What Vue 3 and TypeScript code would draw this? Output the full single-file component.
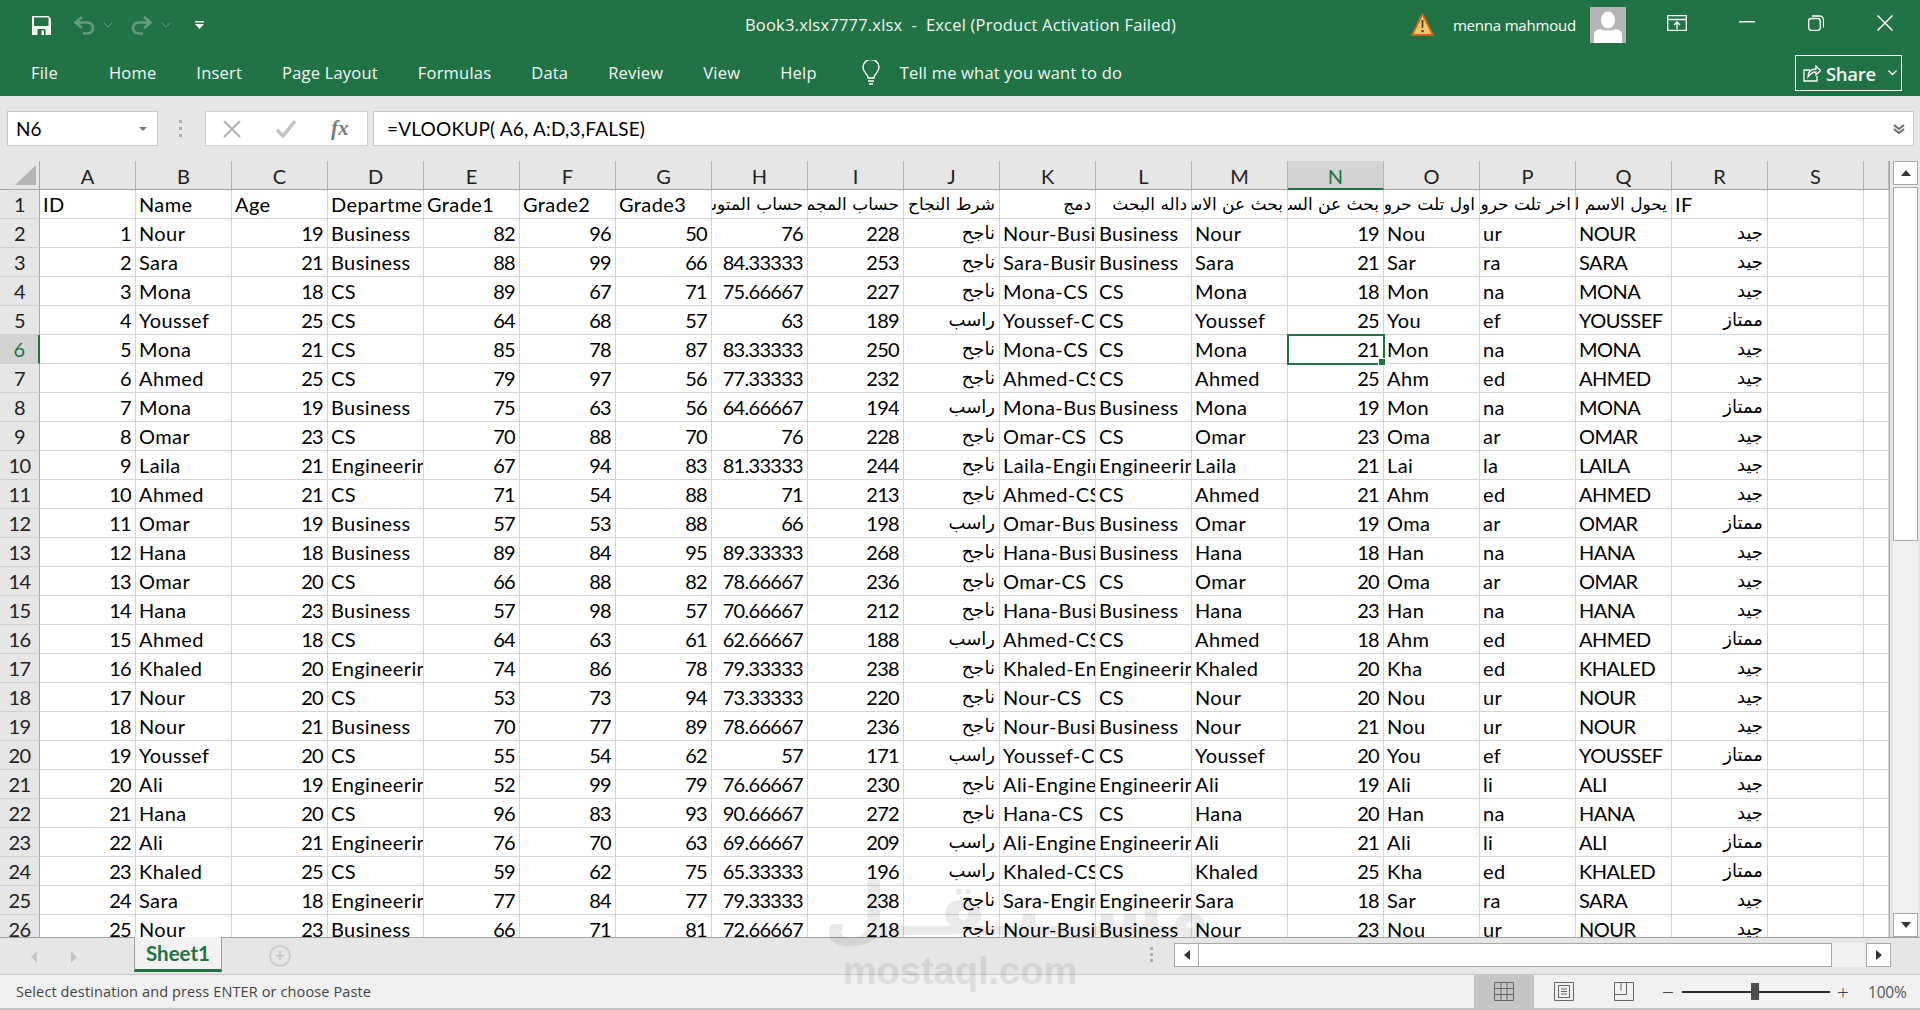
<template>
  <div class="app">
    <header class="titlebar">
      <div class="qat">
        <svg class="save" width="19" height="19" viewBox="0 0 19 19">
          <path d="M0 0h16.500L19 2.500V19H0z" fill="#f4f4f4" />
          <path d="M2 1.500h14.500v8.500H2z" fill="#217346" />
          <path d="M5.500 13h8v6h-8z" fill="#217346" />
          <path d="M9.500 14.500h2.500V19H9.500z" fill="#fff" />
        </svg>
        <svg class="dim" width="22" height="19" viewBox="0 0 22 19" fill="none" stroke="#fff" stroke-width="2.600">
          <path d="M9 1 2.500 6.500 9 12" />
          <path d="M3 6.500h11c8 0 8 11 0 11h-4" />
        </svg>
        <svg class="dim chev" width="8" height="5" viewBox="0 0 8 5" fill="none" stroke="#fff"><path d="m0 0 4 4 4-4" /></svg>
        <svg class="dim redo" width="22" height="19" viewBox="0 0 22 19" fill="none" stroke="#fff" stroke-width="2.600">
          <path d="m13 1 6.500 5.500L13 12" />
          <path d="M19 6.500H8c-8 0-8 11 0 11h4" />
        </svg>
        <svg class="dim chev" width="8" height="5" viewBox="0 0 8 5" fill="none" stroke="#fff"><path d="m0 0 4 4 4-4" /></svg>
        <svg class="custom" width="9" height="8" viewBox="0 0 9 8" fill="#fff"><path d="M0 0h9v1.500H0zM0 3h9L4.500 8z" /></svg>
      </div>
      <div class="doc-title">Book3.xlsx7777.xlsx&nbsp; - &nbsp;Excel (Product Activation Failed)</div>
      <div class="window-side">
        <svg class="warn" width="23" height="23" viewBox="0 0 23 23">
          <path d="M11.500 1 22 22H1z" fill="#f5c56b" stroke="#c9661f" stroke-width="1.800" stroke-linejoin="round" />
          <path d="M10.500 7h2l-.3 8h-1.400zM10.400 17h2.200v2.200h-2.200z" fill="#4a3a20" />
        </svg>
        <span class="user">menna mahmoud</span>
        <div class="avatar">
          <svg width="36" height="36" viewBox="0 0 36 36" fill="#fff">
            <ellipse cx="18" cy="13" rx="7" ry="8.500" />
            <path d="M4 36v-8c0-4 2-5 6-6 3 2 13 2 16 0 4 1 6 2 6 6v8z" />
          </svg>
        </div>
        <svg class="ribbon-opt" width="20" height="16" viewBox="0 0 20 16" fill="none" stroke="#fff" stroke-width="1.300">
          <path d="M.7.700h18.600v14.600H.7zM.7 4.500h18.600M10 14V7M7 10l3-3 3 3" />
        </svg>
        <svg class="win-min" width="16" height="2" viewBox="0 0 16 2"><path d="M0 0h16v1.500H0z" fill="#fff" /></svg>
        <svg class="win-restore" width="16" height="16" viewBox="0 0 16 16" fill="none" stroke="#fff" stroke-width="1.300">
          <rect x=".7" y="3.500" width="11.500" height="11.800" rx="2.500" />
          <path d="M4 1h7.500a4 4 0 0 1 4 4v7.500" />
        </svg>
        <svg class="win-close" width="16" height="16" viewBox="0 0 16 16" stroke="#fff" stroke-width="1.500"><path d="m.5.500 15 15M15.500.500l-15 15" /></svg>
      </div>
    </header>

    <nav class="ribbon">
      <span v-for="tab in tabs" :key="tab" class="tab">{{ tab }}</span>
      <svg class="bulb" width="18" height="26" viewBox="0 0 18 26" fill="none" stroke="#fff" stroke-width="1.400">
        <path d="M6 18c0-4-5-6-5-10.500a8 8 0 0 1 16 0C17 12 12 14 12 18z" />
        <path d="M6 21h6M7 24h4" />
      </svg>
      <span class="tell">Tell me what you want to do</span>
      <div class="share">
        <svg width="18" height="18" viewBox="0 0 18 18" fill="none" stroke="#fff" stroke-width="1.300">
          <path d="M7 6H1v11h13v-5" />
          <path d="M5 13c0-5 3-8 8-8V2l4.500 4.500L13 11V8c-4 0-6 2-8 5z" />
        </svg>
        <b>Share</b>
        <svg width="9" height="6" viewBox="0 0 9 6" fill="none" stroke="#fff" stroke-width="1.400"><path d="m.5.500 4 4 4-4" /></svg>
      </div>
    </nav>

    <section class="formula-row">
      <div class="name-box">
        <span>N6</span>
        <i class="caret"></i>
      </div>
      <div class="grip"><i></i><i></i><i></i></div>
      <div class="fx-box">
        <svg width="18" height="18" viewBox="0 0 18 18" stroke="#b3b3b3" stroke-width="2"><path d="m1 1 16 16M17 1 1 17" /></svg>
        <svg width="20" height="18" viewBox="0 0 20 18" fill="none" stroke="#c4c4c4" stroke-width="3.500"><path d="m1 10 6 6L19 1" /></svg>
        <span class="fx">fx</span>
      </div>
      <div class="formula-input">
        <span>=VLOOKUP( A6, A:D,3,FALSE)</span>
        <svg width="12" height="10" viewBox="0 0 12 10" fill="none" stroke="#6a6a6a" stroke-width="2"><path d="m1 1 5 4 5-4M1 5l5 4 5-4" /></svg>
      </div>
    </section>

    <section class="sheet-area">
      <div class="grid-wrap">
        <div class="grid">
          <div class="corner"><i></i></div>
          <div v-for="col in columns" :key="col" class="col-head" :class="{ picked: col === 'N' }">{{ col }}</div>
          <div class="col-head"></div>

          <template v-for="(row, r) in rows" :key="r">
            <div class="row-head" :class="{ picked: r === 5 }">{{ r + 1 }}</div>
            <div
              v-for="(cell, c) in row"
              :key="c"
              class="cell"
              :class="[cell.kind, { active: r === 5 && c === 13, top: r === 0 }]"
              :dir="cell.kind === 'ar' ? 'rtl' : undefined"
            >{{ cell.text }}</div>
          </template>
        </div>
      </div>
      <div class="vscroll">
        <div class="sb-btn"><i class="arrow up"></i></div>
        <div class="vthumb"></div>
        <div class="sb-btn"><i class="arrow down"></i></div>
      </div>
    </section>

    <section class="tabstrip">
      <i class="tri left"></i>
      <i class="tri right"></i>
      <div class="sheet-tab">Sheet1</div>
      <div class="add-sheet">+</div>
      <div class="grip strip-grip"><i></i><i></i><i></i></div>
      <div class="hscroll">
        <div class="sb-btn"><i class="arrow back"></i></div>
        <div class="hthumb"></div>
        <div class="sb-btn fwd"><i class="arrow next"></i></div>
      </div>
    </section>

    <footer class="statusbar">
      <span class="status-text">Select destination and press ENTER or choose Paste</span>
      <div class="views">
        <div class="view on">
          <svg width="20" height="19" viewBox="0 0 20 19" fill="none" stroke="#666"><path d="M.5.500h19v18H.5zM.5 6.500h19M.5 12.500h19M7 .5v18M13 .5v18" /></svg>
        </div>
        <div class="view">
          <svg width="20" height="19" viewBox="0 0 20 19" fill="none" stroke="#666"><path d="M.5.500h19v18H.5zM4.500 3.500h11v12h-11zM7 7h6M7 9.500h6M7 12h6" /></svg>
        </div>
        <div class="view">
          <svg width="20" height="19" viewBox="0 0 20 19" fill="none" stroke="#666"><path d="M.5.500h19v18H.5zM.5 12.500h12V.5M7 .5v8" /></svg>
        </div>
      </div>
      <span class="zoom-sign minus">−</span>
      <div class="slider"><i></i></div>
      <span class="zoom-sign plus">+</span>
      <span class="zoom-val">100%</span>
    </footer>

    <div class="watermark">
      <div class="wm-ar">مســتـقــل</div>
      <div class="wm-en">mostaql.com</div>
    </div>
  </div>
</template>

<script setup lang="ts">
interface Student {
  name: string
  age: number
  dept: string
  g1: number
  g2: number
  g3: number
}

interface Cell {
  text: string
  kind: string
}

const tabs = ['File', 'Home', 'Insert', 'Page Layout', 'Formulas', 'Data', 'Review', 'View', 'Help']
const columns = 'ABCDEFGHIJKLMNOPQRS'.split('')

const raw: [string, number, string, number, number, number][] = [
  ['Nour', 19, 'Business', 82, 96, 50],
  ['Sara', 21, 'Business', 88, 99, 66],
  ['Mona', 18, 'CS', 89, 67, 71],
  ['Youssef', 25, 'CS', 64, 68, 57],
  ['Mona', 21, 'CS', 85, 78, 87],
  ['Ahmed', 25, 'CS', 79, 97, 56],
  ['Mona', 19, 'Business', 75, 63, 56],
  ['Omar', 23, 'CS', 70, 88, 70],
  ['Laila', 21, 'Engineering', 67, 94, 83],
  ['Ahmed', 21, 'CS', 71, 54, 88],
  ['Omar', 19, 'Business', 57, 53, 88],
  ['Hana', 18, 'Business', 89, 84, 95],
  ['Omar', 20, 'CS', 66, 88, 82],
  ['Hana', 23, 'Business', 57, 98, 57],
  ['Ahmed', 18, 'CS', 64, 63, 61],
  ['Khaled', 20, 'Engineering', 74, 86, 78],
  ['Nour', 20, 'CS', 53, 73, 94],
  ['Nour', 21, 'Business', 70, 77, 89],
  ['Youssef', 20, 'CS', 55, 54, 62],
  ['Ali', 19, 'Engineering', 52, 99, 79],
  ['Hana', 20, 'CS', 96, 83, 93],
  ['Ali', 21, 'Engineering', 76, 70, 63],
  ['Khaled', 25, 'CS', 59, 62, 75],
  ['Sara', 18, 'Engineering', 77, 84, 77],
  ['Nour', 23, 'Business', 66, 71, 81],
]

const students: Student[] = raw.map(([name, age, dept, g1, g2, g3]) => ({ name, age, dept, g1, g2, g3 }))

const txt = (text: string): Cell => ({ text, kind: 'txt' })
const caps = (text: string): Cell => ({ text, kind: 'txt caps' })
const num = (text: string | number): Cell => ({ text: String(text), kind: 'num' })
const ar = (text: string): Cell => ({ text, kind: 'ar' })

const headerRow: Cell[] = [
  txt('ID'), txt('Name'), txt('Age'), txt('Department'), txt('Grade1'), txt('Grade2'), txt('Grade3'),
  ar('حساب المتوسط'), ar('حساب المجموع'), ar('شرط النجاح'), ar('دمج'), ar('داله البحث'),
  ar('بحث عن الاسم'), ar('بحث عن السن'), ar('اول تلت حروف'), ar('اخر تلت حروف'), ar('يحول الاسم لكبتل'),
  txt('IF'), txt(''), txt(''),
]

// الصفوف محسوبة من البيانات زي ما هي في الشيت
const rows: Cell[][] = [
  headerRow,
  ...students.map((s, i) => {
    const sum = s.g1 + s.g2 + s.g3
    const avg = sum / 3
    const pass = avg >= 70
    return [
      num(i + 1), txt(s.name), num(s.age), txt(s.dept), num(s.g1), num(s.g2), num(s.g3),
      num(parseFloat(avg.toFixed(5))), num(sum), ar(pass ? 'ناجح' : 'راسب'),
      txt(`${s.name}-${s.dept}`), txt(s.dept), txt(s.name), num(s.age),
      txt(s.name.slice(0, 3)), txt(s.name.slice(-2)), caps(s.name.toUpperCase()),
      ar(pass ? 'جيد' : 'ممتاز'), txt(''), txt(''),
    ]
  }),
]
</script>

<style>
html,
body {
  margin: 0;
  height: 100%;
  overflow: hidden;
  background: #e6e6e6;
}
</style>

<style scoped>
.app {
  position: relative;
  display: flex;
  flex-direction: column;
  width: 1920px;
  height: 1010px;
  overflow: hidden;
  font-family: "Open Sans", "Noto Sans", sans-serif;
  background: #e6e6e6;
}

.titlebar {
  position: relative;
  display: flex;
  justify-content: space-between;
  height: 50px;
  background: #217346;
  color: #fff;
}

.qat {
  display: flex;
  align-items: center;
  padding-left: 32px;
}

.save {
  margin-right: 22px;
}

.dim {
  opacity: 0.3;
}

.chev {
  margin-left: 9px;
}

.redo {
  margin-left: 19px;
}

.custom {
  margin-left: 25px;
}

.doc-title {
  position: absolute;
  left: 745px;
  top: 13px;
  font-size: 16.500px;
  line-height: 24px;
  letter-spacing: 0.2px;
  white-space: nowrap;
  color: #f2f6f3;
}

.window-side {
  display: flex;
  align-items: flex-start;
  padding-right: 27px;
}

.warn {
  margin-top: 13px;
}

.user {
  margin: 14px 14px 0 19px;
  font-size: 15px;
  line-height: 22px;
  letter-spacing: -0.2px;
  white-space: nowrap;
}

.avatar {
  width: 36px;
  height: 36px;
  margin-top: 7px;
  background: #b5b5b5;
}

.avatar svg {
  display: block;
}

.ribbon-opt {
  margin: 15px 0 0 41px;
}

.win-min {
  margin: 21px 0 0 52px;
}

.win-restore {
  margin: 15px 0 0 53px;
}

.win-close {
  margin: 15px 0 0 53px;
}

.ribbon {
  display: flex;
  align-items: center;
  gap: 40px;
  height: 46px;
  padding-left: 31px;
  background: #217346;
  color: #f4f7f5;
  font-size: 16.500px;
  letter-spacing: 0.2px;
}

.tab {
  white-space: nowrap;
  margin-top: -1px;
}

.tab:first-child {
  margin-right: 11px;
}

.bulb {
  margin-left: 5px;
}

.tell {
  margin-top: -1px;
  margin-left: -20px;
  white-space: nowrap;
}

.share {
  display: flex;
  align-items: center;
  box-sizing: border-box;
  width: 107px;
  height: 36px;
  margin: 0 18px 0 auto;
  padding: 0 0 0 7px;
  border: 1px solid #fff;
  font-size: 18.500px;
  letter-spacing: -0.3px;
}

.share b {
  margin: 0 12px 0 5px;
  font-weight: 600;
}

.formula-row {
  display: flex;
  height: 35px;
  margin-top: 15px;
  padding-left: 7px;
}

.name-box {
  display: flex;
  align-items: center;
  justify-content: space-between;
  box-sizing: border-box;
  width: 151px;
  padding: 0 10px 0 8px;
  background: #fff;
  border: 1px solid #c6c6c6;
  font-family: Lato, sans-serif;
  font-size: 19px;
}

.caret {
  border: 4px solid transparent;
  border-top: 4px solid #777;
  border-bottom: 0;
}

.grip {
  display: flex;
  flex-direction: column;
  justify-content: center;
  gap: 4px;
  width: 3px;
  margin: 0 23px 0 21px;
}

.grip i {
  display: block;
  width: 3px;
  height: 3px;
  background: #adadad;
}

.fx-box {
  display: flex;
  align-items: center;
  box-sizing: border-box;
  width: 163px;
  padding-left: 17px;
  gap: 35px;
  background: #fff;
  border: 1px solid #d2d2d2;
}

.fx {
  font-family: "Liberation Serif", serif;
  font-size: 21px;
  font-style: italic;
  font-weight: 700;
  color: #7a7a7a;
}

.formula-input {
  display: flex;
  align-items: center;
  justify-content: space-between;
  box-sizing: border-box;
  width: 1541px;
  margin-left: 5px;
  padding: 0 8px 0 13px;
  background: #fff;
  border: 1px solid #c6c6c6;
  font-family: Lato, sans-serif;
  font-size: 19px;
  letter-spacing: 0.2px;
}

.sheet-area {
  display: flex;
  height: 776px;
  margin-top: 15px;
}

.grid-wrap {
  width: 1889px;
  height: 776px;
  overflow: hidden;
  border-right: 1px solid #ababab;
  border-bottom: 1px solid #9f9f9f;
  margin-bottom: -1px;
  background: #fff;
}

.grid {
  display: grid;
  grid-template-columns: 40px repeat(19, 96px) 25px;
  grid-auto-rows: 29px;
  font-family: Lato, sans-serif;
  font-size: 20px;
  line-height: 28px;
  color: #000;
}

.corner,
.col-head,
.row-head {
  box-sizing: border-box;
  background: #e6e6e6;
  color: #222;
  text-align: center;
}

.corner {
  position: relative;
  border-right: 1px solid #a9a9a9;
  border-bottom: 1px solid #a9a9a9;
}

.corner i {
  position: absolute;
  right: 3px;
  bottom: 4px;
  border-left: 21px solid transparent;
  border-bottom: 20px solid #b4b4b4;
}

.col-head {
  border-right: 1px solid #b5b5b5;
  border-bottom: 1px solid #9f9f9f;
  padding-top: 1px;
}

.row-head {
  border-right: 1px solid #a9a9a9;
  border-bottom: 1px solid #d0d0d0;
  letter-spacing: -0.6px;
}

.col-head.picked {
  background: #d3d3d3;
  color: #217346;
  border-bottom: 2px solid #217346;
}

.row-head.picked {
  background: #d3d3d3;
  color: #217346;
  border-right: 2px solid #217346;
}

.cell {
  position: relative;
  box-sizing: border-box;
  padding: 0 3px;
  overflow: hidden;
  white-space: nowrap;
  border-right: 1px solid #d4d4d4;
  border-bottom: 1px solid #d4d4d4;
  background: #fff;
}

.cell.txt {
  letter-spacing: 0.4px;
}

.cell.caps {
  letter-spacing: -0.5px;
}

.cell.num {
  text-align: right;
  padding-right: 4px;
  letter-spacing: -0.7px;
}

.cell.ar {
  padding: 0 4px;
  font-family: "DejaVu Sans", sans-serif;
  font-size: 18px;
  text-align: right;
}

.cell.ar.top {
  font-size: 17px;
}

.cell.active {
  overflow: visible;
  outline: 2px solid #217346;
  outline-offset: -1px;
  z-index: 2;
}

.cell.active::after {
  content: "";
  position: absolute;
  right: -3px;
  bottom: -3px;
  width: 6px;
  height: 6px;
  background: #217346;
  border: 1px solid #fff;
}

.vscroll {
  display: flex;
  flex-direction: column;
  width: 25px;
  height: 776px;
  margin: 0 2px 0 3px;
  background: #f0f0f0;
}

.sb-btn {
  display: flex;
  align-items: center;
  justify-content: center;
  box-sizing: border-box;
  width: 25px;
  height: 24px;
  flex: none;
  background: #fff;
  border: 1px solid #a9a9a9;
}

.vthumb {
  flex: none;
  box-sizing: border-box;
  width: 25px;
  height: 354px;
  margin: 2px 0 auto;
  background: #fff;
  border: 1px solid #a9a9a9;
}

.arrow {
  display: block;
  width: 0;
  height: 0;
  border: 5px solid transparent;
}

.arrow.up {
  border-top: 0;
  border-bottom: 6px solid #333;
}

.arrow.down {
  border-bottom: 0;
  border-top: 6px solid #333;
}

.arrow.back {
  border-left: 0;
  border-right: 6px solid #333;
}

.arrow.next {
  border-right: 0;
  border-left: 6px solid #333;
}

.tabstrip {
  display: flex;
  align-items: flex-start;
  height: 38px;
  box-sizing: border-box;
  border-bottom: 1px solid #c6c6c6;
  border-top: 1px solid #9f9f9f;
}

.tri {
  width: 0;
  height: 0;
  margin-top: 13px;
  border: 6px solid transparent;
}

.tri.left {
  margin-left: 31px;
  border-left: 0;
  border-right: 6px solid #c4c4c4;
}

.tri.right {
  margin-left: 34px;
  border-right: 0;
  border-left: 6px solid #c4c4c4;
}

.sheet-tab {
  box-sizing: border-box;
  width: 88px;
  height: 35px;
  margin: -1px 0 0 57px;
  background: #f2f2f2;
  border: 1px solid #9f9f9f;
  border-top: 0;
  border-bottom: 3px solid #217346;
  text-align: center;
  font-family: Lato, sans-serif;
  font-size: 20.500px;
  font-weight: 700;
  line-height: 33px;
  color: #217346;
}

.add-sheet {
  box-sizing: border-box;
  width: 22px;
  height: 22px;
  margin: 7px 0 0 47px;
  border: 2px solid #cfcfcf;
  border-radius: 50%;
  color: #c2c2c2;
  text-align: center;
  font-size: 18px;
  line-height: 17px;
}

.strip-grip {
  height: 22px;
  margin: 5px 21px 0 859px;
  gap: 3px;
}

.hscroll {
  display: flex;
  width: 717px;
  height: 24px;
  margin-top: 5px;
  background: #f0f0f0;
}

.hthumb {
  box-sizing: border-box;
  width: 633px;
  height: 24px;
  margin-right: 34px;
  background: #fff;
  border: 1px solid #a9a9a9;
  border-left: 0;
}

.sb-btn.fwd {
  margin-left: auto;
}

.statusbar {
  display: flex;
  align-items: center;
  height: 33px;
  background: #f1f1f1;
  font-size: 14.500px;
  letter-spacing: 0.12px;
  color: #444;
  border-bottom: 2px solid #c4c4c4;
}

.status-text {
  margin-left: 16px;
  white-space: nowrap;
}

.views {
  display: flex;
  margin-left: auto;
}

.view {
  display: flex;
  align-items: center;
  justify-content: center;
  width: 60px;
  height: 33px;
}

.view.on {
  background: #c6c6c6;
}

.zoom-sign {
  width: 14px;
  text-align: center;
  font-size: 21px;
  font-weight: 300;
  color: #444;
}

.zoom-sign.minus {
  margin-left: 7px;
}

.zoom-sign.plus {
  margin-left: 6px;
}

.slider {
  position: relative;
  width: 148px;
  height: 2px;
  margin-left: 7px;
  background: #2d2d2d;
}

.slider i {
  position: absolute;
  left: 69px;
  top: -8px;
  width: 8px;
  height: 17px;
  background: #4d4d4d;
}

.zoom-val {
  width: 40px;
  margin: 0 12px 0 18px;
  font-size: 15.500px;
  letter-spacing: -0.2px;
  color: #555;
}

.watermark {
  position: absolute;
  left: 824px;
  top: 868px;
  width: 272px;
  text-align: center;
  color: #000;
  opacity: 0.08;
  pointer-events: none;
  font-weight: 700;
}

.wm-ar {
  font-family: "DejaVu Sans", sans-serif;
  font-size: 72px;
  line-height: 84px;
  white-space: nowrap;
}

.wm-en {
  font-family: "Liberation Sans", sans-serif;
  font-size: 38px;
  line-height: 38px;
}
</style>
